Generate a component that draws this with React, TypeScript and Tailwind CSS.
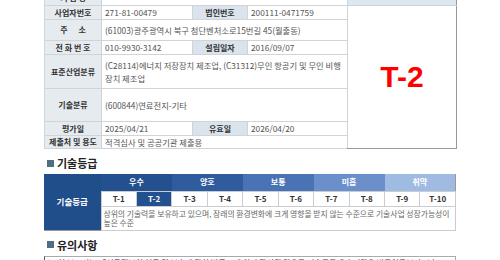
import React from "react";

const font = { fontFamily: '"Noto Sans CJK KR", "Noto Sans", sans-serif' };

function Label({ children, className = "" }: { children: React.ReactNode; className?: string }) {
  return (
    <td className={`border border-[#cfd4d9] text-center font-bold text-[#333] text-[8px] leading-[10px] ${className}`}>
      {children}
    </td>
  );
}

function Value({ children, colSpan, className = "" }: { children: React.ReactNode; colSpan?: number; className?: string }) {
  return (
    <td colSpan={colSpan} className={`border border-[#cfd4d9] text-[#555] text-[8.3px] leading-[11px] pl-[3px] pr-[2px] ${className}`}>
      {children}
    </td>
  );
}

export default function App() {
  const grades = [
    { name: "우수", bg: "bg-[#23508f]" },
    { name: "양호", bg: "bg-[#2f5c9e]" },
    { name: "보통", bg: "bg-[#4a73b5]" },
    { name: "미흡", bg: "bg-[#6a8fca]" },
    { name: "취약", bg: "bg-[#9fbbe1]" },
  ];
  const ts = ["T-1", "T-2", "T-3", "T-4", "T-5", "T-6", "T-7", "T-8", "T-9", "T-10"];
  return (
    <div className="w-[500px] h-[260px] overflow-hidden bg-white" style={font}>
      <div className="ml-[44px] w-[412px] mt-[-10px]">
        <table className="table-fixed border-collapse w-[412px] border-l border-l-[#777] border-b border-b-[#999]">
          <colgroup>
            <col className="w-[57px]" />
            <col className="w-[91px]" />
            <col className="w-[55px]" />
            <col className="w-[100px]" />
            <col className="w-[109px]" />
          </colgroup>
          <tbody>
            <tr className="h-[15px]">
              <Label className="bg-[#e6ebf0]">기 업 명</Label>
              <Value colSpan={3}>&nbsp;</Value>
              <td className="bg-[#dde7f0] border border-[#cfd4d9] border-r-[#999]"></td>
            </tr>
            <tr className="h-[14px]">
              <Label className="bg-[#e6ebf0]">사업자번호</Label>
              <Value>271-81-00479</Value>
              <Label className="bg-[#dbe4ed]">법인번호</Label>
              <Value>200111-0471759</Value>
              <td rowSpan={7} className="border border-[#cfd4d9] border-r-[#999] border-b-[#999] text-center align-middle">
                <span className="text-[#ff0000] font-bold text-[30px] leading-[30px]" style={{ fontFamily: '"Liberation Sans", Arial, sans-serif' }}>
                  T-2
                </span>
              </td>
            </tr>
            <tr className="h-[21px]">
              <Label className="bg-[#e6ebf0]">주&nbsp;&nbsp;&nbsp;&nbsp;&nbsp;&nbsp;소</Label>
              <Value colSpan={3}>(61003)광주광역시 북구 첨단벤처소로15번길 45(월출동)</Value>
            </tr>
            <tr className="h-[14px]">
              <Label className="bg-[#e6ebf0]">전 화 번 호</Label>
              <Value>010-9930-3142</Value>
              <Label className="bg-[#dbe4ed]">설립일자</Label>
              <Value>2016/09/07</Value>
            </tr>
            <tr className="h-[34px]">
              <Label className="bg-[#e6ebf0]">표준산업분류</Label>
              <Value colSpan={3} className="leading-[13px]">
                (C28114)에너지 저장장치 제조업, (C31312)무인 항공기 및 무인 비행장치 제조업
              </Value>
            </tr>
            <tr className="h-[33px]">
              <Label className="bg-[#e6ebf0]">기술분류</Label>
              <Value colSpan={3}>(600844)연료전지-기타</Value>
            </tr>
            <tr className="h-[14px]">
              <Label className="bg-[#e6ebf0]">평가일</Label>
              <Value>2025/04/21</Value>
              <Label className="bg-[#dbe4ed]">유효일</Label>
              <Value>2026/04/20</Value>
            </tr>
            <tr className="h-[13px]">
              <Label className="bg-[#e6ebf0]">제출처 및 용도</Label>
              <Value colSpan={3}>적격심사 및 공공기관 제출용</Value>
            </tr>
          </tbody>
        </table>

        <div className="flex items-center gap-[3px] mt-[8px] ml-[3px] h-[12px]">
          <div className="w-[7px] h-[7px] bg-[#4e6e86]" />
          <span className="text-[11px] font-bold text-[#222] leading-[12px]">기술등급</span>
        </div>

        <table className="table-fixed border-collapse w-[412px] mt-[5px] border-r border-r-[#999] border-b border-b-[#999]">
          <colgroup>
            <col className="w-[57px]" />
            {ts.map((t) => (
              <col key={t} />
            ))}
          </colgroup>
          <tbody>
            <tr className="h-[17px]">
              <td rowSpan={3} className="bg-[#1f4e8b] text-white text-[8.5px] font-bold text-center align-middle">
                기술등급
              </td>
              {grades.map((g) => (
                <td key={g.name} colSpan={2} className={`${g.bg} text-white text-[8px] font-bold text-center`}>
                  {g.name}
                </td>
              ))}
            </tr>
            <tr className="h-[15px]">
              {ts.map((t) => (
                <td
                  key={t}
                  className={`border border-[#c9cdd2] text-center text-[8px] font-bold ${t === "T-2" ? "bg-[#23508f] text-white" : "bg-white text-[#333]"}`}
                >
                  {t}
                </td>
              ))}
            </tr>
            <tr className="h-[24px]">
              <td colSpan={10} className="border border-[#c9cdd2] text-[#666] text-[7.8px] leading-[9px] pl-[2px] align-middle break-keep">
                상위의 기술력을 보유하고 있으며, 장래의 환경변화에 크게 영향을 받지 않는 수준으로 기술사업 성장가능성이 높은 수준
              </td>
            </tr>
          </tbody>
        </table>

        <div className="flex items-center gap-[3px] mt-[8px] ml-[3px] h-[12px]">
          <div className="w-[7px] h-[7px] bg-[#4e6e86]" />
          <span className="text-[11px] font-bold text-[#222] leading-[12px]">유의사항</span>
        </div>

        <div className="mt-[5px] border-l border-l-[#555] border-t border-t-[#aaa] border-r border-r-[#aaa] pl-[3px] pt-[1px]">
          <p className="text-[8px] text-[#333] leading-[10px] whitespace-nowrap overflow-hidden">
            ▶ 이 보고서는 「신용정보의 이용 및 보호에 관한 법률」에 의거 작성된 경우로 기술등급 유효기간은 발급일로부터 1년
          </p>
        </div>
      </div>
    </div>
  );
}
